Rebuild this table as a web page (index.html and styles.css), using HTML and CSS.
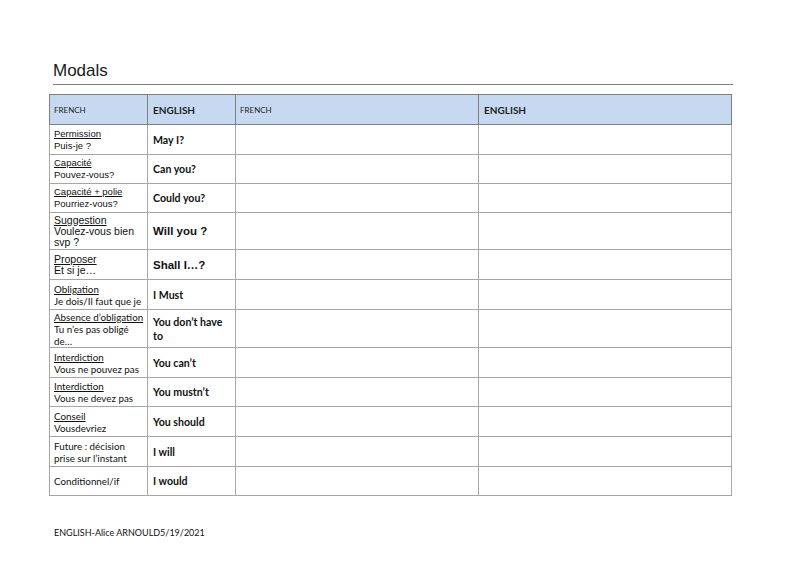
FILE: index.html
```html
<!DOCTYPE html>
<html>
<head>
<meta charset="utf-8">
<link rel="stylesheet" href="styles.css">
</head>
<body>
<div class="page">
  <h1 class="title">Modals</h1>
  <table class="modals">
    <colgroup>
      <col class="c1"><col class="c2"><col class="c3"><col class="c4">
    </colgroup>
    <thead>
      <tr class="head">
        <th>FRENCH</th><th class="b">ENGLISH</th><th>FRENCH</th><th class="b">ENGLISH</th>
      </tr>
    </thead>
    <tbody>
      <tr class="r30"><td class="fr arial"><u>Permission</u><br>Puis-je ?</td><td class="en">May I?</td><td></td><td></td></tr>
      <tr class="r29"><td class="fr arial"><u>Capacité</u><br>Pouvez-vous?</td><td class="en">Can you?</td><td></td><td></td></tr>
      <tr class="r29"><td class="fr arial"><u>Capacité + polie</u><br>Pourriez-vous?</td><td class="en">Could you?</td><td></td><td></td></tr>
      <tr class="r37"><td class="fr big"><u>Suggestion</u><br>Voulez-vous bien svp ?</td><td class="en bigen">Will you ?</td><td></td><td></td></tr>
      <tr class="r30"><td class="fr big"><u>Proposer</u><br>Et si je…</td><td class="en bigen">Shall I…?</td><td></td><td></td></tr>
      <tr class="r30"><td class="fr"><u>Obligation</u><br>Je dois/Il faut que je</td><td class="en">I Must</td><td></td><td></td></tr>
      <tr class="r38"><td class="fr"><u>Absence d’obligation</u><br>Tu n’es pas obligé de…</td><td class="en tall">You don’t have to</td><td></td><td></td></tr>
      <tr class="r30"><td class="fr"><u>Interdiction</u><br>Vous ne pouvez pas</td><td class="en">You can’t</td><td></td><td></td></tr>
      <tr class="r29"><td class="fr"><u>Interdiction</u><br>Vous ne devez pas</td><td class="en">You mustn’t</td><td></td><td></td></tr>
      <tr class="r30"><td class="fr"><u>Conseil</u><br>Vousdevriez</td><td class="en">You should</td><td></td><td></td></tr>
      <tr class="r30"><td class="fr">Future : décision prise sur l’instant</td><td class="en">I will</td><td></td><td></td></tr>
      <tr class="r29"><td class="fr">Conditionnel/if</td><td class="en">I would</td><td></td><td></td></tr>
    </tbody>
  </table>
  <div class="footer">ENGLISH-Alice ARNOULD5/19/2021</div>
</div>
</body>
</html>
```
FILE: styles.css
```css
html, body {
  margin: 0;
  padding: 0;
  background: #ffffff;
}
.page {
  width: 800px;
  height: 565px;
  padding: 61px 0 0 49px;
  box-sizing: border-box;
  font-family: Lato, "Liberation Sans", sans-serif;
  color: #000;
}
.title {
  margin: 0 0 0 4px;
  width: 680px;
  font-family: "Liberation Sans", Arial, sans-serif;
  font-size: 17px;
  font-weight: normal;
  line-height: 19px;
  color: #1a1a1a;
  padding-bottom: 4px;
  border-bottom: 1px solid #7f7f7f;
}
.modals {
  margin-top: 9px;
  border-collapse: collapse;
  table-layout: fixed;
  width: 682px;
}
.c1 { width: 98px; }
.c2 { width: 88px; }
.c3 { width: 243px; }
.c4 { width: 253px; }
.modals th, .modals td {
  border: 1px solid #a6a6a6;
  padding: 0 2px 0 4px;
  vertical-align: middle;
  text-align: left;
}
.head th {
  height: 29px;
  background: #c6d9f1;
  border-color: #7f7f7f;
  font-size: 8px;
  font-weight: normal;
  color: #1f1f1f;
}
.head th.b {
  font-weight: bold;
  font-size: 10px;
  padding-left: 5px;
}
.r29 td { height: 28px; }
.r30 td { height: 29px; }
.r37 td { height: 36px; }
.r38 td { height: 37px; }
.fr {
  font-size: 9.8px;
  line-height: 12px;
  color: #111;
}
.fr.arial {
  font-family: "Liberation Sans", Arial, sans-serif;
  font-size: 9.5px;
}
.fr.big {
  font-family: "Liberation Sans", Arial, sans-serif;
  font-size: 10.5px;
  line-height: 11px;
}
.modals td.en {
  padding-left: 5px;
  font-weight: bold;
  font-size: 10.6px;
  line-height: 18px;
  color: #111;
}
.modals td.en.bigen {
  font-family: "Liberation Sans", Arial, sans-serif;
  font-size: 11.5px;
}
.modals td.en.tall {
  line-height: 14px;
}
.footer {
  margin: 31px 0 0 5px;
  font-size: 9px;
  color: #111;
}
```
